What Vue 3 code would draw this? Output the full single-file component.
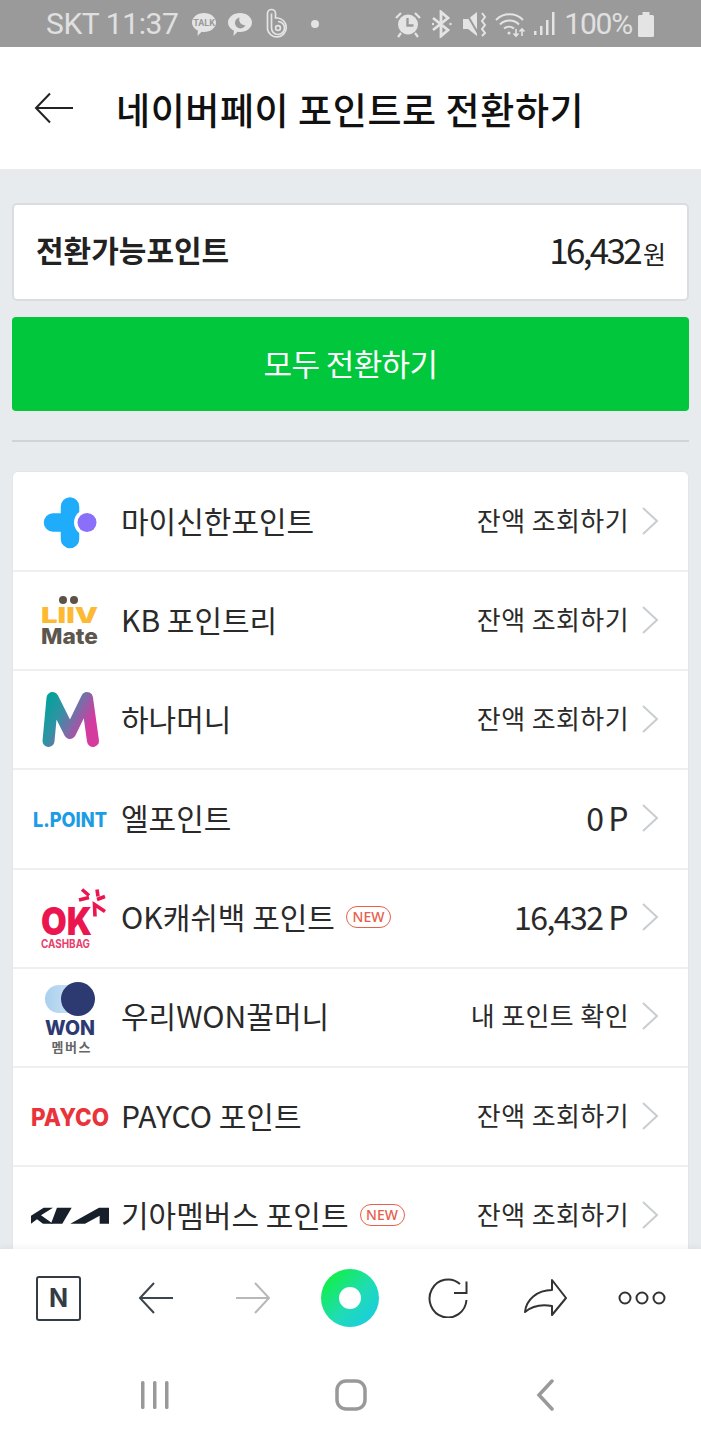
<script setup>
const rows = [
  { key: 'shinhan', name: '마이신한포인트', value: '잔액 조회하기' },
  { key: 'liiv', name: 'KB 포인트리', value: '잔액 조회하기' },
  { key: 'hana', name: '하나머니', value: '잔액 조회하기' },
  { key: 'lpoint', name: '엘포인트', value: '0 P', big: true },
  { key: 'ok', name: 'OK캐쉬백 포인트', value: '16,432 P', big: true, isNew: true },
  { key: 'won', name: '우리WON꿀머니', value: '내 포인트 확인' },
  { key: 'payco', name: 'PAYCO 포인트', value: '잔액 조회하기' },
  { key: 'kia', name: '기아멤버스 포인트', value: '잔액 조회하기', isNew: true },
]
</script>

<template>
  <div class="screen">
    <div class="status">
      <span class="st-text left">SKT 11:37</span>
      <svg class="st-ic first" width="26" height="28" viewBox="0 0 26 28"><path d="M13 3C19.600 3 25 7.200 25 12.500S19.600 22 13 22c-.8 0-1.600-.1-2.400-.2L6.500 26l.4-5.400C3.400 18.900 1 15.900 1 12.500 1 7.200 6.400 3 13 3z" fill="#e4e4e4"/><text x="13" y="16" text-anchor="middle" class="talk">TALK</text></svg>
      <svg class="st-ic gap10" width="26" height="28" viewBox="0 0 26 28"><path d="M13 3C19.600 3 25 7.200 25 12.500S19.600 22 13 22c-.8 0-1.600-.1-2.400-.2L6.500 26l.4-5.400C3.400 18.900 1 15.900 1 12.500 1 7.200 6.400 3 13 3z" fill="#e4e4e4"/><path d="M12.500 7.500a5.500 5.500 0 1 0 6 7.600 5.500 5.500 0 0 1-6-7.600z" fill="#9a9a9a"/></svg>
      <svg class="st-ic gap13" width="23" height="32" viewBox="0 0 23 32" fill="none" stroke="#e4e4e4" stroke-width="1.700"><path d="M1.500 5.500a4 4 0 0 1 8 0V10h2.500a9.500 9.500 0 1 1-10.500 11.500z"/><path d="M5.500 5.500v14.500a6.500 6.500 0 1 0 6.500-6.500"/><circle cx="12" cy="20" r="2.400"/></svg>
      <span class="st-dot"></span>
      <span class="st-space"></span>
      <svg class="st-ic" width="26" height="28" viewBox="0 0 26 28" fill="#e4e4e4"><circle cx="13" cy="14.500" r="10"/><path d="M12.500 8v7.500h6" stroke="#9a9a9a" stroke-width="2.400" fill="none"/><path d="M1 8l5-5M25 8l-5-5M6 23l-3 4M20 23l3 4" stroke="#e4e4e4" stroke-width="2.200"/></svg>
      <svg class="st-ic gap11" width="21" height="28" viewBox="0 0 21 28" fill="none" stroke="#e4e4e4" stroke-width="2.800"><path d="M2 8l15 12-7 6V2l7 6L2 20"/><circle cx="2" cy="14" r="1.200" fill="#e4e4e4" stroke="none"/><circle cx="19.500" cy="14" r="1.200" fill="#e4e4e4" stroke="none"/></svg>
      <svg class="st-ic gap11" width="25" height="28" viewBox="0 0 25 28" fill="#e4e4e4"><path d="M1 9h5l9-7v24l-9-7H1z"/><path d="M3 1l14 24" stroke="#9a9a9a" stroke-width="2"/><path d="M20 3l3 4-3 4 3 4-3 4 3 4-3 3" fill="none" stroke="#e4e4e4" stroke-width="2"/></svg>
      <svg class="st-ic gap9" width="31" height="28" viewBox="0 0 31 28" fill="none" stroke="#e4e4e4" stroke-width="2"><path d="M1 10a19 19 0 0 1 27 0M5 14.500a13.500 13.500 0 0 1 19 0M9 18.500a8 8 0 0 1 10 0"/><circle cx="14" cy="23" r="1.500" fill="#e4e4e4" stroke="none"/><path d="M21 19v7M18.500 23.500l2.500 2.500 2.500-2.500M27 26v-7M24.500 21.500l2.500-2.500 2.500 2.500" stroke-width="1.600"/></svg>
      <svg class="st-ic gap7" width="22" height="28" viewBox="0 0 22 28" fill="#e4e4e4"><rect x="1" y="21" width="2.500" height="4"/><rect x="7" y="16" width="2.500" height="9"/><rect x="13" y="10" width="2.500" height="15"/><rect x="19" y="2" width="2.500" height="23"/></svg>
      <span class="st-text pct">100%</span>
      <svg class="st-ic gap5" width="18" height="28" viewBox="0 0 18 28" fill="#e4e4e4"><rect x="5.500" y="2" width="7" height="4"/><rect x="1" y="5" width="16" height="22" rx="1.500"/></svg>
    </div>

    <header class="head">
      <svg class="back" width="40" height="32" viewBox="0 0 40 32" fill="none" stroke="#222" stroke-width="2"><path d="M39 16H2M16 1.500L2 16l14 14.500"/></svg>
      <h1>네이버페이 포인트로 전환하기</h1>
    </header>

    <main class="body">
      <section class="card">
        <strong>전환가능포인트</strong>
        <span class="amount">16,432<small>원</small></span>
      </section>
      <button class="cta">모두 전환하기</button>
      <hr class="rule">
      <ul class="list">
        <li v-for="r in rows" :key="r.key" class="row">
          <div class="logo">
            <svg v-if="r.key === 'shinhan'" width="108" height="98" viewBox="0 0 108 98">
              <path d="M57 33.500V66M40 49.500h24" fill="none" stroke="#1eacfb" stroke-width="18.500" stroke-linecap="round"/>
              <circle cx="74" cy="49.500" r="13" fill="#fff"/>
              <circle cx="74" cy="49.500" r="9.500" fill="#8a6ffa"/>
            </svg>
            <svg v-else-if="r.key === 'liiv'" width="108" height="98" viewBox="0 0 108 98">
              <circle cx="50" cy="28" r="4" fill="#5c5247"/><circle cx="61" cy="28" r="4" fill="#5c5247"/>
              <text x="56.500" y="50.500" text-anchor="middle" textLength="57" lengthAdjust="spacingAndGlyphs" class="lg lg-liiv">LIIV</text>
              <text x="56.500" y="72" text-anchor="middle" textLength="57" lengthAdjust="spacingAndGlyphs" class="lg lg-mate">Mate</text>
            </svg>
            <svg v-else-if="r.key === 'hana'" width="108" height="98" viewBox="0 0 108 98">
              <defs><linearGradient id="hana" x1="0" y1="0" x2="1" y2="0.500"><stop offset="0" stop-color="#06a19a"/><stop offset=".35" stop-color="#2f93a4"/><stop offset=".65" stop-color="#7d6ba8"/><stop offset="1" stop-color="#d53a9f"/></linearGradient></defs>
              <path d="M35.500 70L39.500 27 57 62 74 27 80 70" fill="none" stroke="url(#hana)" stroke-width="12" stroke-linecap="round" stroke-linejoin="round"/>
            </svg>
            <svg v-else-if="r.key === 'lpoint'" width="108" height="98" viewBox="0 0 108 98">
              <text x="57" y="57" text-anchor="middle" textLength="74" lengthAdjust="spacingAndGlyphs" class="lg lg-lp">L.POINT</text>
            </svg>
            <svg v-else-if="r.key === 'ok'" width="108" height="98" viewBox="0 0 108 98">
              <text x="28" y="65.500" textLength="51" lengthAdjust="spacingAndGlyphs" class="lg lg-ok">OK</text>
              <text x="28" y="78.500" textLength="49" lengthAdjust="spacingAndGlyphs" class="lg lg-cash">CASHBAG</text>
              <path d="M66 31l10-2.500M69 20.500l7 6M84 20.500l1 7M92 27.500l-8 3M92 42.500l-10.500-7 .5 12" fill="none" stroke="#eb1650" stroke-width="3.600"/>
            </svg>
            <svg v-else-if="r.key === 'won'" width="108" height="98" viewBox="0 0 108 98">
              <defs><linearGradient id="wonl" x1="0" y1="0" x2="1" y2="0"><stop offset="0" stop-color="#a9d0ee"/><stop offset="1" stop-color="#d8e9f6"/></linearGradient></defs>
              <rect x="32" y="17" width="40" height="28" rx="14" fill="url(#wonl)"/>
              <circle cx="65" cy="31" r="17" fill="#2d3a72"/>
              <text x="57" y="66.500" text-anchor="middle" textLength="50" lengthAdjust="spacingAndGlyphs" class="lg lg-won">WON</text>
              <text x="58" y="84" text-anchor="middle" textLength="39" class="lg lg-mem">멤버스</text>
            </svg>
            <svg v-else-if="r.key === 'payco'" width="108" height="98" viewBox="0 0 108 98">
              <text x="57" y="57.500" text-anchor="middle" textLength="78" lengthAdjust="spacingAndGlyphs" class="lg lg-pay">PAYCO</text>
            </svg>
            <svg v-else width="108" height="98" viewBox="0 0 108 98">
              <g transform="translate(12 28.200) scale(.3333)" fill="#17202a">
                <path d="M18 86V62L56 38H84L48 60 84 86H54L36 72 18 86Z"/>
                <path d="M96 38H140L112 86H78Z"/>
                <path d="M136 86L222 38H252V86H224V62L180 86Z"/>
              </g>
            </svg>
          </div>
          <span class="name">{{ r.name }}</span>
          <span v-if="r.isNew" class="new">NEW</span>
          <span class="value" :class="{ big: r.big }">{{ r.value }}</span>
          <svg class="chev" width="19" height="30" viewBox="0 0 19 30" fill="none" stroke="#c9cdd0" stroke-width="2"><path d="M2 2l14 13L2 28"/></svg>
        </li>
      </ul>
    </main>

    <footer class="foot">
      <div class="tools">
        <div class="tool"><div class="nbox">N</div></div>
        <div class="tool"><svg width="36" height="34" viewBox="0 0 36 34" fill="none" stroke="#3c444c" stroke-width="2"><path d="M35 17H2M16 2L2 17l14 15"/></svg></div>
        <div class="tool"><svg width="36" height="34" viewBox="0 0 36 34" fill="none" stroke="#b8b8b8" stroke-width="2"><path d="M1 17h33M20 2l14 15-14 15"/></svg></div>
        <div class="tool"><span class="orb"><span></span></span></div>
        <div class="tool"><svg width="40" height="40" viewBox="0 0 40 40" fill="none" stroke="#333" stroke-width="2"><path d="M32 6A18.500 19 0 1 0 38.500 22"/><path d="M38.500 3.500V15H26"/></svg></div>
        <div class="tool"><svg width="44" height="38" viewBox="0 0 44 38" fill="none" stroke="#333" stroke-width="2" stroke-linejoin="round"><path d="M29 1L43 19 29 36V27C18 25 9 27 2 33 3 21 14 11 29 11Z"/></svg></div>
        <div class="tool"><svg width="48" height="18" viewBox="0 0 48 18" fill="none" stroke="#333" stroke-width="2"><circle cx="7" cy="9" r="5.500"/><circle cx="24" cy="9" r="5.500"/><circle cx="41" cy="9" r="5.500"/></svg></div>
      </div>
      <nav class="nav">
        <svg width="30" height="32" viewBox="0 0 30 32" fill="#999"><rect x="1" y="2" width="3.500" height="28" rx="1.500"/><rect x="13" y="2" width="3.500" height="28" rx="1.500"/><rect x="25" y="2" width="3.500" height="28" rx="1.500"/></svg>
        <svg width="32" height="32" viewBox="0 0 32 32" fill="none" stroke="#999" stroke-width="3.500"><rect x="2" y="2" width="28" height="28" rx="9"/></svg>
        <svg width="20" height="32" viewBox="0 0 20 32" fill="none" stroke="#999" stroke-width="3.500" stroke-linecap="round"><path d="M16 2L3 16l13 14"/></svg>
      </nav>
    </footer>
  </div>
</template>

<style>
html, body { margin: 0; background: #fff; }
</style>

<style scoped>
.screen {
  width: 701px;
  height: 1440px;
  display: flex;
  flex-direction: column;
  overflow: hidden;
  background: #fff;
  color: #222;
  font-family: "Noto Sans CJK KR", "Noto Sans", sans-serif;
}
.status {
  height: 47px;
  flex: none;
  box-sizing: border-box;
  padding: 0 46px;
  display: flex;
  align-items: center;
  background: #9a9a9a;
}
.st-text { font: 400 30px/47px Roboto, sans-serif; color: #e0e0e0; white-space: nowrap; }
.left { letter-spacing: -.4px; }
.st-ic { flex: none; }
.first { margin-left: 12px; }
.gap10 { margin-left: 10px; }
.gap13 { margin-left: 13px; }
.gap11 { margin-left: 10px; }
.gap9 { margin-left: 8px; }
.gap7 { margin-left: 7px; }
.gap5 { margin-left: 5px; }
.pct { margin-left: 9px; letter-spacing: -1.200px; }
.st-dot { width: 8px; height: 8px; border-radius: 50%; background: #e4e4e4; margin-left: 22px; }
.st-space { flex: 1; }
.talk { font: 700 9px Roboto, sans-serif; fill: #9a9a9a; }

.head {
  height: 122px;
  flex: none;
  display: flex;
  align-items: center;
  padding-left: 34px;
  box-sizing: border-box;
}
.back { flex: none; }
.head h1 {
  margin: 2px 0 0 42px;
  font-size: 37px;
  line-height: 1;
  font-weight: 500;
  color: #111;
  letter-spacing: .6px;
  white-space: nowrap;
}

.body {
  flex: 1;
  min-height: 0;
  background: #e7ebee;
  padding: 34px 12px 0;
  overflow: hidden;
}
.card {
  height: 98px;
  box-sizing: border-box;
  background: #fff;
  border: 2px solid #d9dde2;
  border-radius: 5px;
  display: flex;
  align-items: center;
  justify-content: space-between;
  padding: 0 21px 0 22px;
}
.card strong { font-size: 30px; font-weight: 700; color: #222; padding-bottom: 6px; }
.amount { font-size: 35px; letter-spacing: -2.700px; color: #222; display: flex; align-items: baseline; padding-bottom: 8px; }
.amount small { font-size: 25px; letter-spacing: 0; margin-left: 3px; }
.cta {
  display: block;
  width: 100%;
  height: 94px;
  margin-top: 16px;
  border: 0;
  border-radius: 4px;
  background: #00c73c;
  color: #fff;
  font-family: inherit;
  font-size: 31px;
  letter-spacing: -.6px;
  padding: 0 0 4px;
}
.rule { height: 2px; border: 0; background: #cfd4d9; margin: 29px 0 30px; }
.list {
  list-style: none;
  margin: 0 1px;
  padding: 1px 0 0;
  background: #fff;
  border-radius: 5px;
  box-shadow: 0 0 0 1px #e2e6e9;
}
.row {
  height: 99.170px;
  box-sizing: border-box;
  border-bottom: 2px solid #edeff1;
  display: flex;
  align-items: center;
}
.logo { width: 108px; flex: none; height: 98px; }
.logo svg { display: block; }
.lg { font-family: Inter, "Noto Sans CJK KR", sans-serif; font-weight: 800; }
.lg-liiv { font-size: 22px; fill: #fdb933; font-weight: 900; }
.lg-mate { font-size: 22px; fill: #5c564e; }
.lg-lp { font-size: 20px; fill: #1c9be6; }
.lg-ok { font-size: 38px; fill: #eb1650; font-weight: 900; }
.lg-cash { font-size: 11.500px; fill: #e8406c; font-weight: 700; }
.lg-won { font-size: 20px; fill: #2d3a72; }
.lg-mem { font-size: 13px; fill: #666; font-weight: 700; }
.lg-pay { font-size: 24px; fill: #e8343a; }
.name { font-size: 30px; color: #2a2a2a; white-space: nowrap; padding-bottom: 4px; }
.new {
  margin-left: 11px;
  width: 45px;
  height: 22px;
  box-sizing: border-box;
  border: 1.500px solid #e8604c;
  border-radius: 11px;
  color: #e8604c;
  font: 500 14px/19px "Noto Sans", sans-serif;
  text-align: center;
  margin-top: -2px;
}
.value { margin-left: auto; font-size: 26px; letter-spacing: .4px; color: #2a2a2a; white-space: nowrap; padding-bottom: 5px; }
.value.big { font-size: 32px; letter-spacing: -1.500px; margin-right: 2px; }
.chev { margin: 0 28px 2px 12px; flex: none; }

.foot {
  flex: none;
  height: 191px;
  background: #fff;
  position: relative;
  box-shadow: 0 -2px 6px rgba(0,0,0,.05);
}
.tools {
  height: 98px;
  padding: 0 10px;
  display: grid;
  grid-template-columns: repeat(7, 1fr);
}
.tool { display: flex; align-items: center; justify-content: center; }
.nbox {
  width: 45px;
  height: 45px;
  box-sizing: border-box;
  border: 2px solid #333b44;
  border-radius: 3px;
  color: #333b44;
  font: 700 25px/41px Inter, sans-serif;
  text-align: center;
}
.orb {
  width: 58px;
  height: 58px;
  border-radius: 50%;
  background: linear-gradient(135deg, #12ee4e 15%, #1fdcb4 55%, #19cbe6 95%);
  display: flex;
  align-items: center;
  justify-content: center;
}
.orb span { width: 22px; height: 22px; border-radius: 50%; background: #fff; }
.nav {
  height: 95px;
  display: grid;
  grid-template-columns: repeat(3, 195.500px);
  justify-content: center;
  justify-items: center;
  align-items: center;
}
</style>
